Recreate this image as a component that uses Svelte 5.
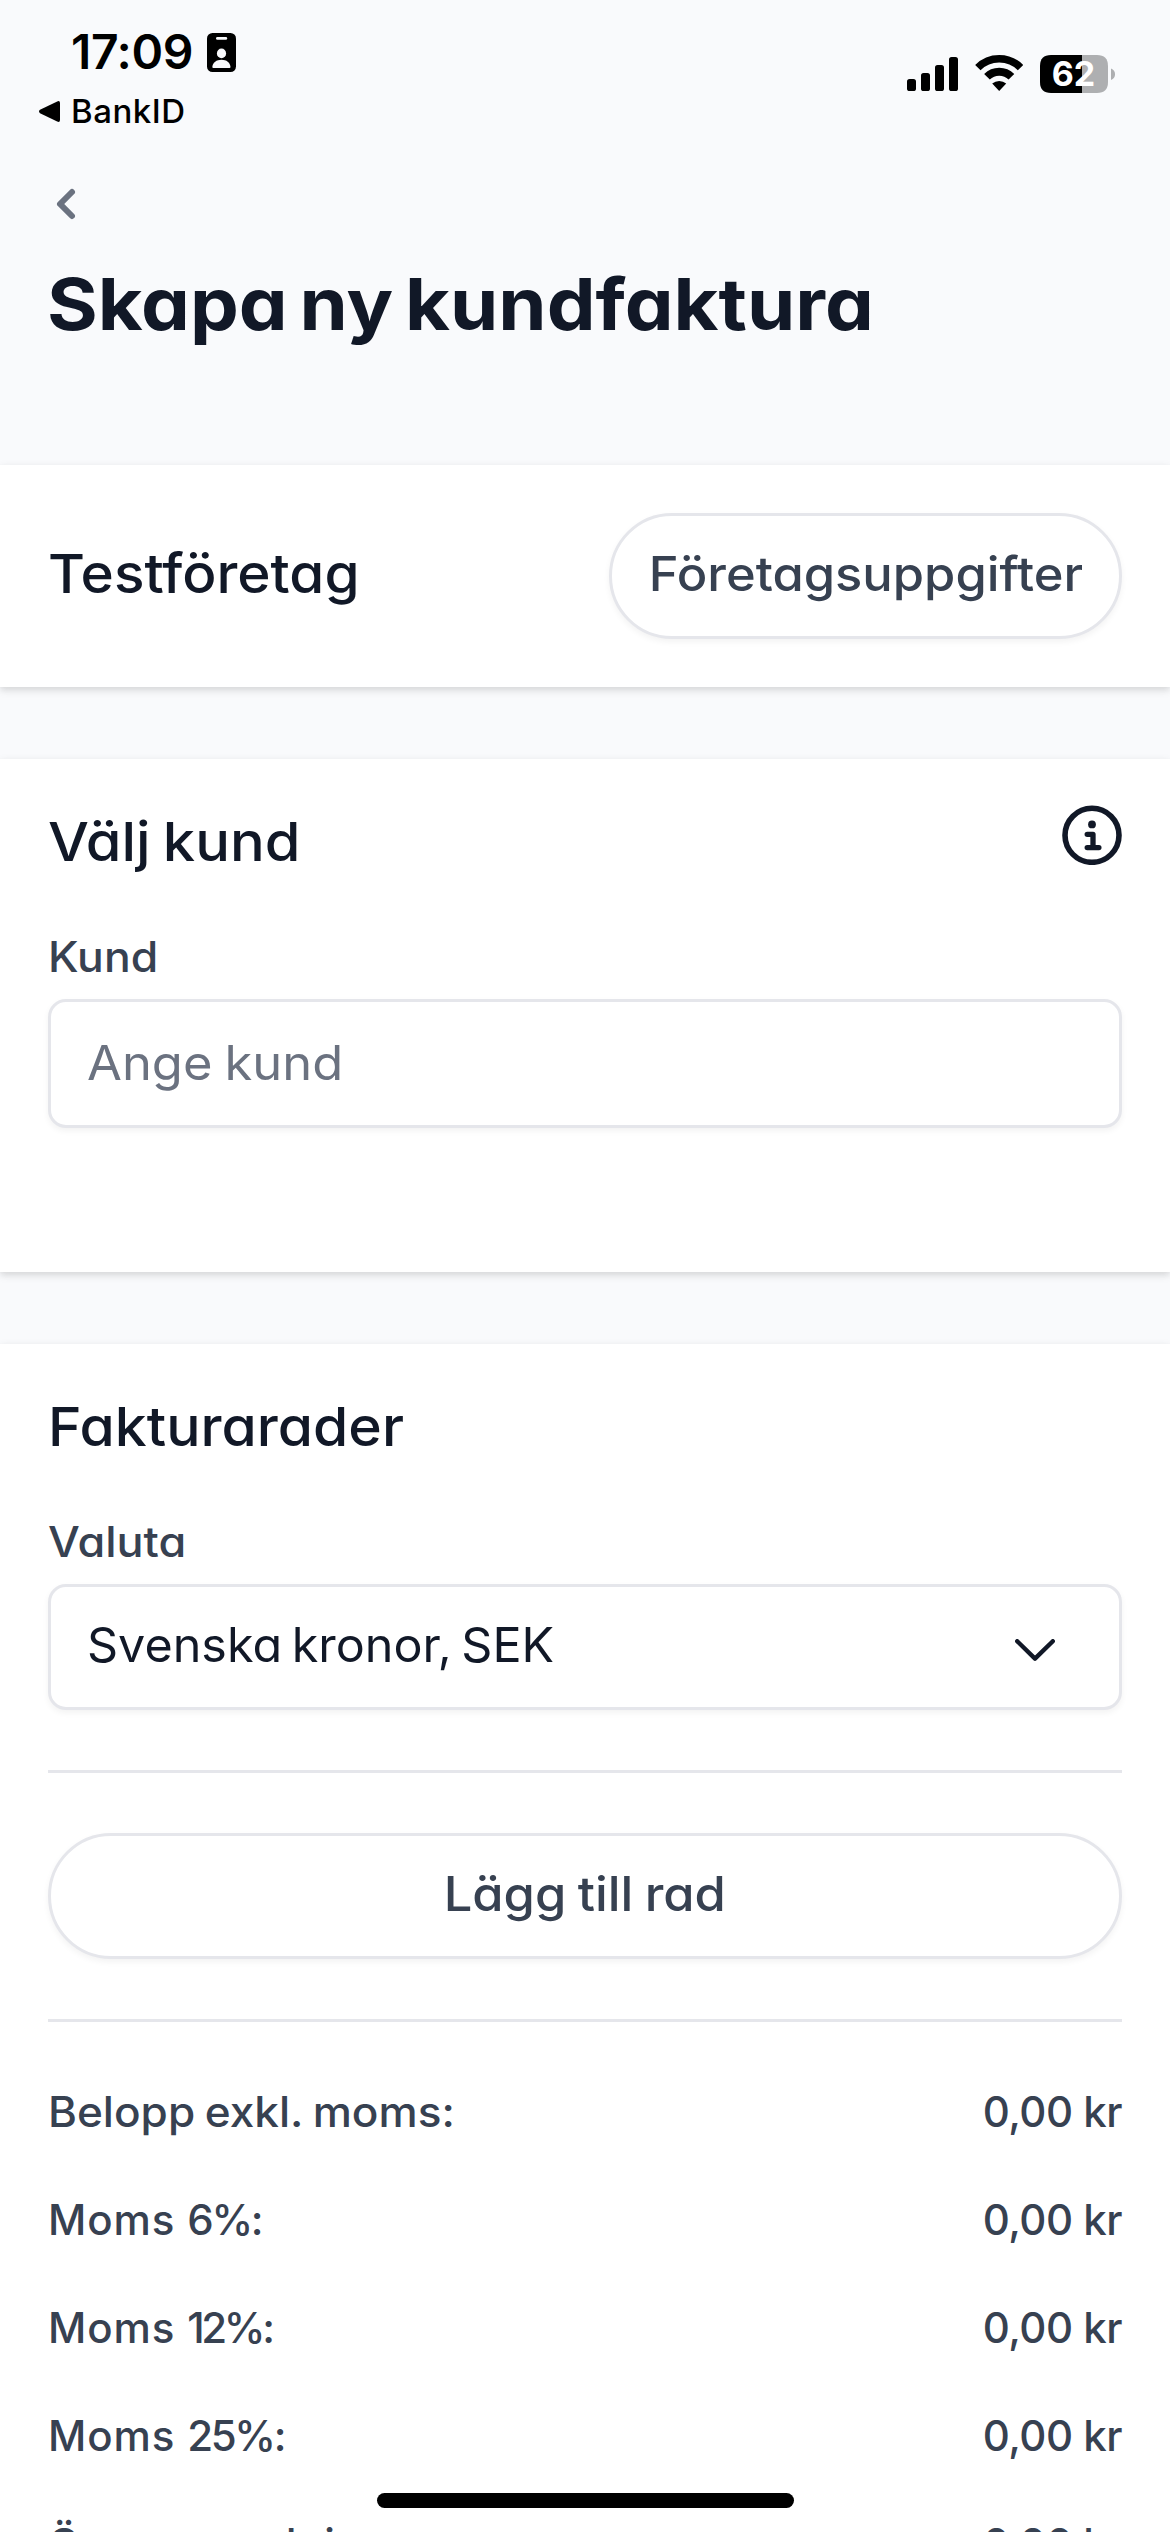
<script>
  const totals = [
    { name: 'Moms', rate: '6%:', value: '0,00 kr', tracking: -2.4 },
    { name: 'Moms', rate: '12%:', value: '0,00 kr', tracking: -3.4 },
    { name: 'Moms', rate: '25%:', value: '0,00 kr', tracking: -2.4 }
  ];
</script>

<div class="screen">
  <div class="status">
    <div class="status-left">
      <div class="clock">
        <span>17:09</span>
        <svg class="badge" viewBox="0 0 29 39" width="29" height="39">
          <rect width="29" height="39" rx="5.5" fill="#000" />
          <rect x="9" y="4" width="11.2" height="2.8" rx="1.4" fill="#f9fafc" />
          <ellipse cx="14.5" cy="20.4" rx="4.6" ry="4.9" fill="#f9fafc" />
          <path d="M5.3 34C5.6 29.6 9.6 26.8 14.5 26.8S23.2 29.6 23.5 34Q23.5 35 22.5 35H6.3Q5.3 35 5.3 34Z" fill="#f9fafc" />
        </svg>
      </div>
      <div class="return">
        <svg viewBox="0 0 21 21" width="21" height="21">
          <path d="M1 8.8 18.2.4Q21-.6 21 2V19Q21 21.6 18.2 20.6L1 12.2Q-1 10.5 1 8.8Z" fill="#000" />
        </svg>
        <span>BankID</span>
      </div>
    </div>
    <div class="status-right">
      <svg class="bars" viewBox="0 0 51 34" width="51" height="34">
        <rect x="0" y="22" width="9" height="12" rx="2.6" />
        <rect x="14" y="16" width="9" height="18" rx="2.6" />
        <rect x="28" y="8" width="9" height="26" rx="2.6" />
        <rect x="42" y="0" width="9" height="34" rx="2.6" />
      </svg>
      <svg viewBox="0 0 48.4 38" width="48.4" height="38">
        <g fill="none" stroke="#000">
          <path stroke-width="7.6" d="M2.85 12.65A30.2 30.2 0 0 1 45.55 12.65" />
          <path stroke-width="8" d="M11.97 21.77A17.3 17.3 0 0 1 36.43 21.77" />
        </g>
        <path d="M24.2 36 17.2 28.6A10.5 10.5 0 0 1 31.2 28.6Z" />
      </svg>
      <svg viewBox="0 0 75 38" width="75" height="38">
        <path d="M42 0H57Q68 0 68 11V27Q68 38 57 38H42Z" fill="#aeafb1" />
        <path d="M42 0H11Q0 0 0 11V27Q0 38 11 38H42Z" />
        <path d="M71 13.5Q75 15 75 19.2T71 25Z" fill="#aeafb1" />
        <text x="33.5" y="31" text-anchor="middle" class="percent">62</text>
      </svg>
    </div>
  </div>

  <header>
    <svg class="back" viewBox="0 0 20 20" width="60" height="60">
      <path fill="#6b7280" d="M12.707 5.293a1 1 0 0 1 0 1.414L9.414 10l3.293 3.293a1 1 0 0 1-1.414 1.414l-4-4a1 1 0 0 1 0-1.414l4-4a1 1 0 0 1 1.414 0z" />
    </svg>
    <h1>Skapa ny kundfaktura</h1>
  </header>

  <section class="card company">
    <h2 class="name">Testföretag</h2>
    <button class="pill details"><span>Företagsuppgifter</span></button>
  </section>

  <section class="card customer">
    <div class="head">
      <h2 class="choose">Välj kund</h2>
      <svg viewBox="0 0 60 60" width="60" height="60">
        <circle cx="30" cy="30.3" r="27" fill="none" stroke="#111827" stroke-width="5.6" />
        <circle cx="30" cy="19.4" r="3.9" fill="#111827" />
        <path d="M25.2 29.3H31V42.6M25.2 42.6H36.9" fill="none" stroke="#111827" stroke-width="5.3" stroke-linecap="round" stroke-linejoin="round" />
      </svg>
    </div>
    <div class="label kund">Kund</div>
    <div class="field input"><span>Ange kund</span></div>
  </section>

  <section class="card lines">
    <div class="head"><h2 class="rows">Fakturarader</h2></div>
    <div class="label valuta">Valuta</div>
    <div class="field select">
      <span>Svenska kronor, SEK</span>
      <svg viewBox="0 0 40 22" width="40" height="22">
        <path d="M2.2 2.2 20 19.6 37.8 2.2" fill="none" stroke="#111827" stroke-width="4.4" stroke-linecap="round" stroke-linejoin="round" />
      </svg>
    </div>
    <hr />
    <button class="pill add"><span>Lägg till rad</span></button>
    <hr />
    <div class="totals">
      <div class="total">
        <span class="net">Belopp exkl. moms:</span>
        <span class="value">0,00 kr</span>
      </div>
      {#each totals as row}
        <div class="total">
          <span class="vat">{row.name} <span style:letter-spacing="{row.tracking}px">{row.rate}</span></span>
          <span class="value">{row.value}</span>
        </div>
      {/each}
      <div class="total">
        <span class="rounding">Öresavrundning:</span>
        <span class="value">0,00 kr</span>
      </div>
    </div>
  </section>

  <div class="home"></div>
</div>

<style>
  :global(body) { margin: 0; background: #f9fafc; }
  .screen {
    position: relative;
    width: 1170px;
    height: 2532px;
    overflow: hidden;
    background: #f9fafc;
    color: #111827;
    font-family: Inter, 'Liberation Sans', sans-serif;
    font-feature-settings: 'cv11';
    white-space: nowrap;
  }
  svg { display: block; flex: none; }

  .status {
    display: flex;
    justify-content: space-between;
    height: 174px;
    color: #000;
    font-feature-settings: normal;
  }
  .status-left { padding: 24px 0 0 39px; }
  .clock {
    display: flex;
    gap: 14px;
    padding-left: 32px;
    font-size: 48px;
    font-weight: 600;
    line-height: 56px;
    letter-spacing: -0.4px;
  }
  .badge { margin-top: 9px; }
  .return {
    display: flex;
    align-items: center;
    gap: 11px;
    margin-top: 11px;
    font-size: 33px;
    font-weight: 500;
    line-height: 40px;
    letter-spacing: 0.5px;
  }
  .status-right {
    display: flex;
    gap: 17px;
    padding: 55px 55px 0 0;
  }
  .bars { margin-top: 2px; }
  .percent { font-size: 34px; font-weight: 700; fill: #fff; }

  header { height: 291px; }
  .back { margin-left: 36px; }

  h1, h2, .label, .net, .input span, .select span { transform-origin: left center; }

  h1 {
    margin: 25px 0 0 47px;
    font-size: 72px;
    font-weight: 700;
    line-height: 90px;
    word-spacing: -6px;
    transform: scaleX(1.077);
  }

  .card {
    box-sizing: border-box;
    padding: 46px 48px 0;
    background: #fff;
    box-shadow: 0 3px 9px rgba(0, 0, 0, 0.1), 0 3px 6px rgba(0, 0, 0, 0.06);
  }
  .company {
    display: flex;
    align-items: center;
    justify-content: space-between;
    height: 222px;
    padding: 0 48px;
  }
  .customer { height: 513px; margin-top: 72px; }
  .lines { height: 1300px; margin-top: 72px; }

  h2 { margin: 0; font-size: 54px; font-weight: 500; line-height: 72px; }
  .name { padding-bottom: 4px; transform: scaleX(1.05); }
  .choose { word-spacing: -3px; transform: scaleX(1.07); }
  .rows { transform: scaleX(1.057); }
  .choose, .rows { line-height: 74px; }
  .head { display: flex; justify-content: space-between; height: 122px; }

  .label {
    width: max-content;
    color: #374151;
    font-size: 42px;
    font-weight: 500;
    line-height: 60px;
    padding-bottom: 12px;
  }
  .kund { transform: scaleX(1.06); }
  .valuta { transform: scaleX(1.07); }

  .pill, .field {
    box-sizing: border-box;
    border: 3px solid #e5e6eb;
    background: #fff;
    box-shadow: 0 3px 6px rgba(0, 0, 0, 0.05);
    font-size: 48px;
  }
  .pill {
    display: block;
    height: 126px;
    padding: 0 0 5px;
    border-radius: 63px;
    color: #374151;
    font-family: inherit;
    font-feature-settings: inherit;
    font-weight: 500;
  }
  .pill span { display: inline-block; transform: scaleX(1.055); }
  .details { width: 513px; }
  .add { width: 100%; word-spacing: -2px; }
  .field {
    display: flex;
    align-items: center;
    justify-content: space-between;
    padding-left: 36px;
    border-radius: 18px;
  }
  .input { height: 129px; padding-bottom: 2px; color: #6b7280; word-spacing: -2px; }
  .input span { transform: scaleX(1.055); }
  .select { height: 126px; padding-right: 64px; word-spacing: -4px; }
  .select span { padding-bottom: 5px; transform: scaleX(1.01); }
  .select svg { margin-top: 6px; }

  hr { height: 3px; margin: 60px 0; border: 0; background: #e5e6eb; }
  .totals { display: flex; flex-direction: column; gap: 48px; }
  .total {
    display: flex;
    justify-content: space-between;
    color: #374151;
    font-size: 42px;
    font-weight: 500;
    line-height: 60px;
  }
  .net { word-spacing: -2px; transform: scaleX(1.05); }
  .vat { letter-spacing: 0.9px; }
  .rounding { letter-spacing: 1.2px; }
  .value { letter-spacing: -0.5px; }

  .home {
    position: absolute;
    left: 377px;
    bottom: 24px;
    width: 417px;
    height: 15px;
    border-radius: 8px;
    background: #000;
  }
</style>
